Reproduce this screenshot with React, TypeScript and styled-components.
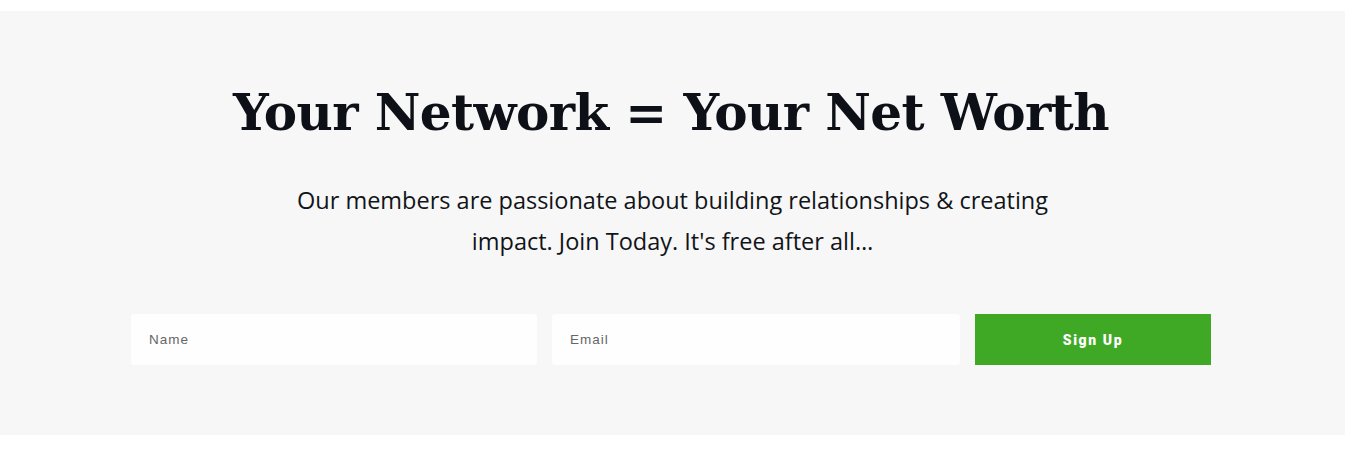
import React from "react";
import styled, { createGlobalStyle } from "styled-components";

const Global = createGlobalStyle`
  html, body { margin: 0; padding: 0; background: #ffffff; }
  body { font-family: "Liberation Sans", Arial, sans-serif; }
`;

const Page = styled.div`
  padding-top: 11px;
  background: #ffffff;
`;

const Section = styled.section`
  background: #f7f7f7;
  height: 424px;
  box-sizing: border-box;
  padding-top: 72px;
  display: flex;
  flex-direction: column;
  align-items: center;
`;

const Title = styled.h1`
  margin: 0 3px 0 0;
  font-family: "DejaVu Serif", "Liberation Serif", serif;
  font-weight: 700;
  font-size: 50px;
  line-height: 60px;
  color: #0d1117;
  text-align: center;
  letter-spacing: -0.6px;
`;

const Lead = styled.p`
  margin: 37px 0 0;
  width: 790px;
  font-family: "Open Sans", "Noto Sans", sans-serif;
  font-size: 23.5px;
  line-height: 41px;
  color: #111418;
  text-align: center;
`;

const Form = styled.form`
  margin: 52px 3px 0 0;
  display: flex;
  gap: 15px;
  width: 1080px;
`;

const Field = styled.input<{ $w: number }>`
  width: ${(p) => p.$w}px;
  height: 51px;
  box-sizing: border-box;
  border: none;
  border-radius: 3px;
  background: #fefefe;
  padding: 0 18px;
  font-family: "Liberation Sans", Arial, sans-serif;
  font-size: 13.5px;
  letter-spacing: 1px;
  color: #333;
  outline: none;
  &::placeholder { color: #666666; }
`;

const Submit = styled.button`
  width: 236px;
  height: 51px;
  border: none;
  border-radius: 0;
  background: #3fa925;
  color: #ffffff;
  font-family: "Roboto", "Liberation Sans", sans-serif;
  font-weight: 900;
  font-size: 14px;
  letter-spacing: 1.6px;
  cursor: pointer;
`;

export default function App() {
  return (
    <Page>
      <Global />
      <Section>
        <Title>Your Network = Your Net Worth</Title>
        <Lead>
          Our members are passionate about building relationships &amp; creating
          impact. Join Today. It's free after all…
        </Lead>
        <Form onSubmit={(e) => e.preventDefault()}>
          <Field $w={406} placeholder="Name" />
          <Field $w={408} placeholder="Email" />
          <Submit type="submit">Sign Up</Submit>
        </Form>
      </Section>
    </Page>
  );
}
